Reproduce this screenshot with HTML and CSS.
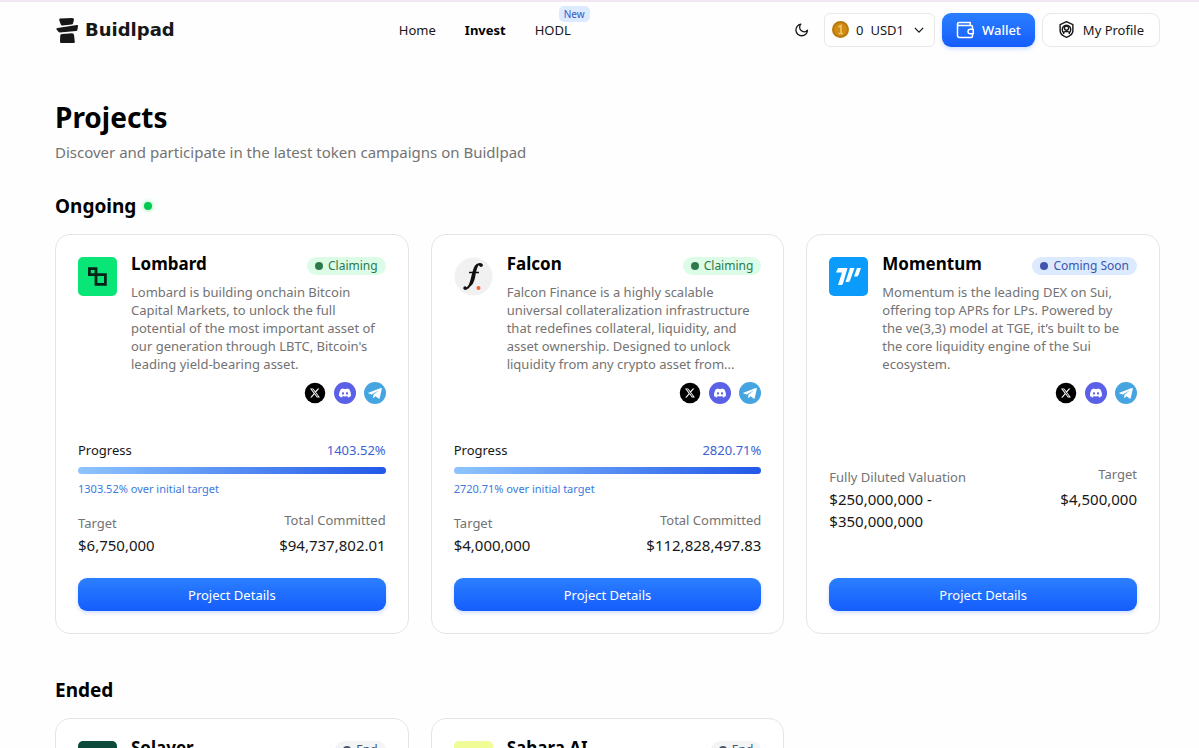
FILE: index.html
```html
<!DOCTYPE html>
<html lang="en">
<head>
    <meta charset="UTF-8">
    <meta name="viewport" content="width=device-width, initial-scale=1.0">
    <title>Buidlpad | Projects</title>
    <link rel="stylesheet" href="styles.css">
</head>
<body>
    <!-- Shared icons -->
    <svg class="sprite" aria-hidden="true">
        <symbol id="icon-x" viewBox="0 0 44 44">
            <circle cx="22" cy="22" r="20.5" fill="#000"/>
            <path transform="translate(12 12) scale(.83)" fill="#fff" d="M18.9 1.15h3.68l-8.04 9.19L24 22.85h-7.4l-5.8-7.59-6.64 7.59H.47l8.6-9.83L0 1.15h7.59l5.25 6.94ZM17.61 20.64h2.04L6.49 3.24H4.3Z"/>
        </symbol>
        <symbol id="icon-discord" viewBox="0 0 44 44">
            <circle cx="22" cy="22" r="22" fill="#5b61e6"/>
            <path transform="translate(10 10)" fill="#fff" d="M20.32 4.37a19.8 19.8 0 0 0-4.89-1.52.07.07 0 0 0-.08.04c-.21.38-.44.87-.6 1.25a18.3 18.3 0 0 0-5.5 0c-.16-.4-.4-.87-.61-1.25a.08.08 0 0 0-.08-.04A19.7 19.7 0 0 0 3.68 4.4C.53 9.05-.32 13.58.1 18.06a.08.08 0 0 0 .03.05c2.05 1.51 4.04 2.43 6 3.03a.08.08 0 0 0 .08-.02c.46-.63.87-1.3 1.22-2a.08.08 0 0 0-.04-.1c-.65-.25-1.27-.55-1.87-.9a.08.08 0 0 1 0-.12l.37-.3a.07.07 0 0 1 .07 0c3.93 1.79 8.18 1.79 12.07 0a.07.07 0 0 1 .07 0l.38.3a.08.08 0 0 1-.01.12c-.6.35-1.22.65-1.87.9a.08.08 0 0 0-.04.1c.36.7.77 1.37 1.22 2a.08.08 0 0 0 .09.02c1.96-.6 3.95-1.52 6-3.03a.08.08 0 0 0 .03-.05c.5-5.18-.84-9.68-3.55-13.66ZM8.02 15.33c-1.18 0-2.16-1.09-2.16-2.42s.96-2.42 2.16-2.42c1.21 0 2.18 1.1 2.16 2.42 0 1.33-.96 2.42-2.16 2.42Zm7.97 0c-1.18 0-2.15-1.09-2.15-2.42s.95-2.42 2.15-2.42c1.22 0 2.18 1.1 2.16 2.42 0 1.33-.94 2.42-2.16 2.42Z"/>
        </symbol>
        <symbol id="icon-telegram" viewBox="0 0 44 44">
            <circle cx="22" cy="22" r="22" fill="#46a5e0"/>
            <path fill="#fff" d="M9 21.5 33.5 12c1.3-.5 2.4.2 2 2.2L31.5 32c-.3 1.5-1.2 1.8-2.4 1.2l-6.2-4.6-3.1 3c-.8.8-1.6.4-1.5-.7l.6-5.2L30 16.5 15.5 25l-6.2-1.9c-1.3-.4-1.3-1.1-.3-1.6Z"/>
        </symbol>
    </svg>

    <!-- Header Section -->
    <header class="header">
        <a class="logo" href="#">
            <svg width="24" height="28" viewBox="0 0 24 28" fill="#171717" aria-hidden="true">
                <path d="M5 2.5 17 2q2-.1 2 1.6l-1 4q-.2.9-1.5 1L7.500 9.5Q6 9.6 5.600 8L4.200 4Q4 2.600 5 2.500Z"/>
                <path d="M2.500 12 22 9q1.200-.1 1 1l-.6 4q-.2 1-1.400 1L5 16.500q-1 0-1.600-.8L1.400 13.200Q1 12.200 2.500 12Z"/>
                <path d="M7 18 17 17.200q1.800 0 2 1.600l.8 7q.2 1.200-1 1.200H6.200Q5 27 5 25.800L5.200 20Q5.200 18.200 7 18Z"/>
            </svg>
            <span>Buidlpad</span>
        </a>

        <nav>
            <ul class="nav-list">
                <li><a href="#">Home</a></li>
                <li><a class="active" href="#">Invest</a></li>
                <li><a href="#">HODL</a><span class="new-tag">New</span></li>
            </ul>
        </nav>

        <div class="actions">
            <button class="theme-button" aria-label="Toggle theme">
                <svg width="14" height="14" viewBox="0 0 24 24" fill="none" stroke="currentColor" stroke-width="2.2" stroke-linejoin="round"><path d="M10 2a7.500 7.500 0 0 0 11.500 10.500A10 10 0 1 1 10 2Z"/></svg>
            </button>
            <button class="pill-button balance">
                <svg width="17" height="17" viewBox="0 0 34 34" aria-hidden="true">
                    <circle cx="17" cy="17" r="17" fill="#b97a0b"/>
                    <circle cx="17" cy="17" r="13" fill="#cf8c14"/>
                    <path d="m13 12 5-3v16m-5 0h9" fill="none" stroke="#f4c768" stroke-width="3"/>
                </svg>
                <span>0</span>
                <span>USD1</span>
                <svg class="chevron" width="10" height="10" viewBox="0 0 24 24" fill="none" stroke="currentColor" stroke-width="3" aria-hidden="true"><path d="m2 7 10 10 10-10"/></svg>
            </button>
            <button class="pill-button wallet">
                <svg width="18" height="18" viewBox="0 0 24 24" fill="none" stroke="currentColor" stroke-width="2" stroke-linejoin="round" aria-hidden="true"><path d="M22 11V8a2 2 0 0 0-2-2H4a2 2 0 0 1-2-2v15a3 3 0 0 0 3 3h15a2 2 0 0 0 2-2v-3M2 4a2 2 0 0 1 2-2h15v4M23 11h-4a3 3 0 0 0 0 6h4Z"/></svg>
                <span>Wallet</span>
            </button>
            <button class="pill-button profile">
                <svg width="17" height="17" viewBox="0 0 24 24" fill="none" stroke="currentColor" stroke-width="2" stroke-linejoin="round" aria-hidden="true"><path d="m12 1 9 4v9c0 4-4 7-9 9-5-2-9-5-9-9V5Z"/><circle cx="12" cy="10" r="3"/><path d="M8 18.500V17a2 2 0 0 1 2-2h4a2 2 0 0 1 2 2v1.500M8 16.500a6 6 0 1 1 8 0"/></svg>
                <span>My Profile</span>
            </button>
        </div>
    </header>

    <!-- Main Projects Section -->
    <main>
        <h1>Projects</h1>
        <p class="subtitle">Discover and participate in the latest token campaigns on Buidlpad</p>

        <section>
            <h2>Ongoing <span class="live-dot"></span></h2>
            <div class="project-grid">
                <article class="card">
                    <div class="card-top">
                        <svg class="project-logo" viewBox="0 0 39 39" aria-hidden="true">
                            <rect width="39" height="39" rx="5" fill="#0ae577"/>
                            <path d="M18 17.700H11.400V11.600H18V27.300H27.400V17.700H18" fill="none" stroke="#06231a" stroke-width="2.800"/>
                        </svg>
                        <div class="card-info">
                            <div class="card-title">
                                <h3>Lombard</h3>
                                <span class="badge claiming">Claiming</span>
                            </div>
                            <p class="description">Lombard is building onchain Bitcoin Capital Markets, to unlock the full potential of the most important asset of our generation through LBTC, Bitcoin's leading yield-bearing asset.</p>
                            <div class="socials">
                                <a href="#" aria-label="X"><svg><use href="#icon-x"/></svg></a>
                                <a href="#" aria-label="Discord"><svg><use href="#icon-discord"/></svg></a>
                                <a href="#" aria-label="Telegram"><svg><use href="#icon-telegram"/></svg></a>
                            </div>
                        </div>
                    </div>
                    <div class="card-data">
                        <div class="progress-row"><span>Progress</span><span class="percent">1403.52%</span></div>
                        <div class="progress-bar"></div>
                        <p class="over-target">1303.52% over initial target</p>
                        <div class="stats">
                            <dl><dt>Target</dt><dd>$6,750,000</dd></dl>
                            <dl class="right"><dt>Total Committed</dt><dd>$94,737,802.01</dd></dl>
                        </div>
                    </div>
                    <button class="details-button">Project Details</button>
                </article>

                <article class="card">
                    <div class="card-top">
                        <svg class="project-logo" viewBox="0 0 39 39" aria-hidden="true">
                            <circle cx="19.500" cy="19.500" r="19" fill="#f1f1f1"/>
                            <path d="M28 8.500c-.5-2-4-2.500-6.200.5-3 4.500-3.300 13-6 19-1.500 3-4 4.500-5.500 3" fill="none" stroke="#111" stroke-width="2"/>
                            <path d="M22 8c-2.500 3-3.500 17-8 22 4 0 6.500-5 7.500-12 .8-4 1.500-8 3.500-10.500Z" fill="#111"/>
                            <path d="M15 15.500h10" stroke="#111" stroke-width="1.500"/>
                            <circle cx="27" cy="8.300" r="1.700" fill="#111"/>
                            <circle cx="11" cy="31" r="1.700" fill="#111"/>
                            <circle cx="24.500" cy="31" r="2" fill="#f06a35"/>
                        </svg>
                        <div class="card-info">
                            <div class="card-title">
                                <h3>Falcon</h3>
                                <span class="badge claiming">Claiming</span>
                            </div>
                            <p class="description">Falcon Finance is a highly scalable universal collateralization infrastructure that redefines collateral, liquidity, and asset ownership. Designed to unlock liquidity from any crypto asset from...</p>
                            <div class="socials">
                                <a href="#" aria-label="X"><svg><use href="#icon-x"/></svg></a>
                                <a href="#" aria-label="Discord"><svg><use href="#icon-discord"/></svg></a>
                                <a href="#" aria-label="Telegram"><svg><use href="#icon-telegram"/></svg></a>
                            </div>
                        </div>
                    </div>
                    <div class="card-data">
                        <div class="progress-row"><span>Progress</span><span class="percent">2820.71%</span></div>
                        <div class="progress-bar"></div>
                        <p class="over-target">2720.71% over initial target</p>
                        <div class="stats">
                            <dl><dt>Target</dt><dd>$4,000,000</dd></dl>
                            <dl class="right"><dt>Total Committed</dt><dd>$112,828,497.83</dd></dl>
                        </div>
                    </div>
                    <button class="details-button">Project Details</button>
                </article>

                <article class="card">
                    <div class="card-top">
                        <svg class="project-logo" viewBox="0 0 39 39" aria-hidden="true">
                            <rect width="39" height="39" rx="5" fill="#0a9bfb"/>
                            <path d="M9 11h9.500L14 26.500q-.5 1.500-2 1.500H9l4-12.500H7ZM21 11h4.500L21 23.500q-.5 1.500-2 1.500h-2.500ZM28 11h4l-2.500 7q-.5 1.500-2 1.500h-2.500Z" fill="#fff"/>
                        </svg>
                        <div class="card-info">
                            <div class="card-title">
                                <h3>Momentum</h3>
                                <span class="badge soon">Coming Soon</span>
                            </div>
                            <p class="description">Momentum is the leading DEX on Sui, offering top APRs for LPs. Powered by the ve(3,3) model at TGE, it’s built to be the core liquidity engine of the Sui ecosystem.</p>
                            <div class="socials">
                                <a href="#" aria-label="X"><svg><use href="#icon-x"/></svg></a>
                                <a href="#" aria-label="Discord"><svg><use href="#icon-discord"/></svg></a>
                                <a href="#" aria-label="Telegram"><svg><use href="#icon-telegram"/></svg></a>
                            </div>
                        </div>
                    </div>
                    <div class="card-data">
                        <div class="stats">
                            <dl><dt>Fully Diluted Valuation</dt><dd>$250,000,000 - $350,000,000</dd></dl>
                            <dl class="right"><dt>Target</dt><dd>$4,500,000</dd></dl>
                        </div>
                    </div>
                    <button class="details-button">Project Details</button>
                </article>
            </div>
        </section>

        <section>
            <h2>Ended</h2>
            <div class="project-grid">
                <article class="card">
                    <div class="card-top">
                        <svg class="project-logo" viewBox="0 0 39 39" aria-hidden="true"><rect width="39" height="39" rx="5" fill="#0d4a3b"/></svg>
                        <div class="card-info">
                            <div class="card-title">
                                <h3>Solayer</h3>
                                <span class="badge ended">End</span>
                            </div>
                        </div>
                    </div>
                </article>

                <article class="card">
                    <div class="card-top">
                        <svg class="project-logo" viewBox="0 0 39 39" aria-hidden="true"><rect width="39" height="39" rx="5" fill="#f0fc96"/></svg>
                        <div class="card-info">
                            <div class="card-title">
                                <h3>Sahara AI</h3>
                                <span class="badge ended">End</span>
                            </div>
                        </div>
                    </div>
                </article>
            </div>
        </section>
    </main>
</body>
</html>
```
FILE: styles.css
```css
/* General Styles */
* {
    box-sizing: border-box;
}

body {
    font-family: "Noto Sans", "Open Sans", sans-serif;
    font-size: 13px;
    line-height: 18px;
    color: #171717;
    background-color: #fefefe;
    border-top: 2px solid #f3e6f3;
    margin: 0;
}

h1, h2, h3, p, ul, dl, dd {
    margin: 0;
    padding: 0;
}

a {
    color: inherit;
    text-decoration: none;
}

button {
    font: inherit;
    color: inherit;
    border: none;
    padding: 0;
    cursor: pointer;
}

svg {
    display: block;
    flex: none;
}

.sprite {
    display: none;
}

/* Header Styles */
.header {
    display: flex;
    justify-content: space-between;
    align-items: center;
    height: 55px;
    padding: 0 39px 0 55px;
}

.logo {
    display: flex;
    align-items: center;
    gap: 6px;
    font-family: "DejaVu Sans", sans-serif;
    font-size: 18px;
    font-weight: bold;
}

.nav-list {
    display: flex;
    gap: 29px;
    list-style: none;
}

.nav-list li {
    position: relative;
}

.nav-list .active {
    font-weight: bold;
    color: #000;
}

.new-tag {
    position: absolute;
    left: 24px;
    bottom: 17px;
    padding: 0 5px;
    border-radius: 5px;
    background-color: #dbeafe;
    color: #3659c4;
    font-size: 10px;
    line-height: 16px;
}

.actions {
    display: flex;
    align-items: center;
    gap: 7px;
}

.theme-button {
    background: none;
    margin-right: 8px;
}

.pill-button {
    display: flex;
    align-items: center;
    gap: 8px;
    height: 34px;
    padding: 0 15px;
    border: 1px solid #e8e8ea;
    border-radius: 9px;
    background-color: #fff;
}

.balance {
    gap: 7px;
    padding: 0 10px 0 7px;
    border-radius: 6px;
}

.chevron {
    margin-left: 3px;
}

.wallet,
.details-button {
    background: linear-gradient(#2b7fff, #155dfc);
    box-shadow: 0 2px 4px rgba(21, 93, 252, 0.2);
    color: white;
}

.wallet {
    padding: 0 14px;
    border: none;
    font-weight: 500;
}

/* Projects Section */
main {
    padding: 42px 39px 44px 55px;
}

h1 {
    font-size: 28px;
    line-height: 36px;
    color: #000;
}

.subtitle {
    margin-top: 6px;
    font-size: 15px;
    line-height: 22px;
    color: #737373;
}

section {
    margin-top: 30px;
}

section + section {
    margin-top: 43px;
}

h2 {
    display: flex;
    align-items: center;
    gap: 8px;
    margin-bottom: 15px;
    font-size: 19px;
    line-height: 26px;
    color: #000;
}

.live-dot {
    width: 8px;
    height: 8px;
    border-radius: 50%;
    background-color: #00c950;
    box-shadow: 0 0 5px #7bf1a8;
}

.project-grid {
    display: grid;
    grid-template-columns: repeat(3, 1fr);
    gap: 22px;
}

/* Project Card */
.card {
    display: flex;
    flex-direction: column;
    padding: 22px;
    border: 1px solid #e5e5e5;
    border-radius: 15px;
    background-color: #fff;
}

.card-top {
    display: flex;
    gap: 14px;
}

.project-logo {
    width: 39px;
    height: 39px;
}

.card-info {
    flex: 1;
}

.card-title {
    display: flex;
    justify-content: space-between;
}

h3 {
    font-size: 17px;
    line-height: 14px;
    color: #000;
}

.badge {
    display: flex;
    align-items: center;
    gap: 5px;
    padding: 0 8px;
    border-radius: 9px;
    font-size: 12px;
    line-height: 18px;
}

.badge::before {
    content: "";
    width: 8px;
    height: 8px;
    border-radius: 50%;
    background-color: currentColor;
}

.claiming {
    background-color: #dcfce7;
    color: #2c7a4b;
}

.soon {
    background-color: #dbeafe;
    color: #3f55ae;
}

.ended {
    background-color: #f3f4f6;
    color: #4a5565;
}

.description {
    margin-top: 8px;
    padding-right: 5px;
    min-height: 90px;
    color: #737373;
}

.socials {
    display: flex;
    justify-content: flex-end;
    gap: 8px;
    margin-top: 9px;
}

.socials svg {
    width: 22px;
    height: 22px;
}

.card-data {
    display: flex;
    flex: 1;
    flex-direction: column;
    justify-content: center;
    margin: 37px 0 22px;
}

.progress-row {
    display: flex;
    justify-content: space-between;
}

.percent {
    color: #3b62d3;
}

.progress-bar {
    height: 7px;
    margin: 8px 0 7px;
    border-radius: 4px;
    background: linear-gradient(90deg, #8ec5ff, #2158e8);
}

.over-target {
    margin-bottom: 15px;
    font-size: 11px;
    line-height: 16px;
    color: #3b7be0;
}

.stats {
    display: grid;
    grid-template-columns: 1fr 1fr;
}

dt {
    line-height: 22px;
    color: #737373;
}

dd {
    font-size: 15px;
    line-height: 22px;
}

.right {
    text-align: right;
}

.right dt {
    margin-bottom: 6px;
    line-height: 16px;
}

.details-button {
    height: 33px;
    border-radius: 9px;
}
```
